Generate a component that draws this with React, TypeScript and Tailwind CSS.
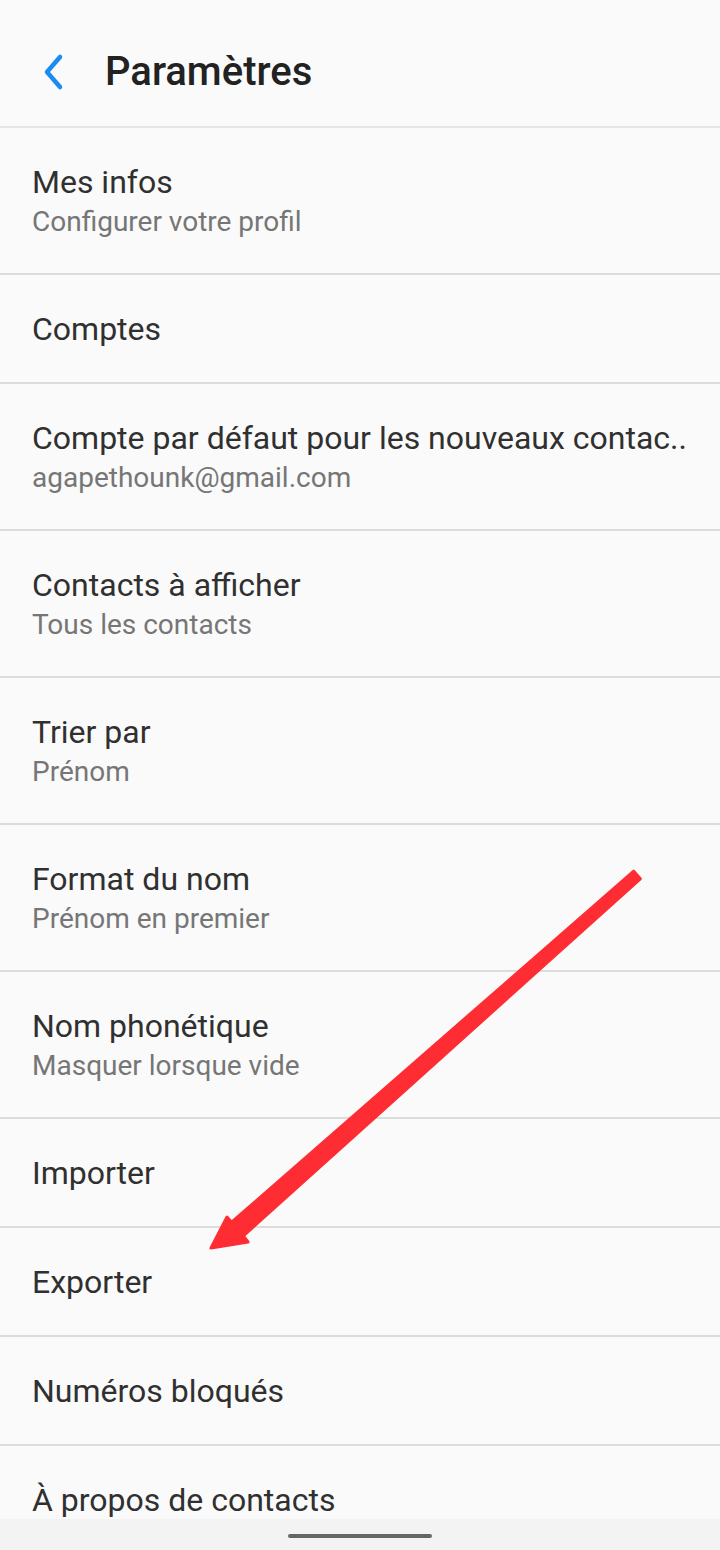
import React from "react";

type Row = { title: string; sub?: string };

const rows: Row[] = [
  { title: "Mes infos", sub: "Configurer votre profil" },
  { title: "Comptes" },
  { title: "Compte par défaut pour les nouveaux contac..", sub: "agapethounk@gmail.com" },
  { title: "Contacts à afficher", sub: "Tous les contacts" },
  { title: "Trier par", sub: "Prénom" },
  { title: "Format du nom", sub: "Prénom en premier" },
  { title: "Nom phonétique", sub: "Masquer lorsque vide" },
  { title: "Importer" },
  { title: "Exporter" },
  { title: "Numéros bloqués" },
  { title: "À propos de contacts" },
];

function SettingRow({ row }: { row: Row }) {
  return (
    <div
      className={`flex flex-col justify-center px-[32px] border-b-2 border-[#dcdcdc] ${
        row.sub ? "h-[147px]" : "h-[109px]"
      }`}
    >
      <div className="text-[32px] leading-[42px] text-[#303030] whitespace-nowrap">{row.title}</div>
      {row.sub && <div className="text-[28px] leading-[38px] text-[#767676]">{row.sub}</div>}
    </div>
  );
}

export default function App() {
  return (
    <div
      className="relative w-[720px] h-[1550px] bg-[#fafafa] flex flex-col overflow-hidden"
      style={{ fontFamily: "Roboto, 'Noto Sans', sans-serif" }}
    >
      {/* Header */}
      <div className="h-[128px] shrink-0 flex items-center pt-[18px] border-b-2 border-[#e6e6e6]">
        <svg width="28" height="40" viewBox="0 0 28 40" className="ml-[40px]">
          <path d="M20 5 L7 20 L20 35" fill="none" stroke="#1a8cf0" strokeWidth="4.5" strokeLinecap="round" strokeLinejoin="round" />
        </svg>
        <h1 className="ml-[37px] text-[40px] font-medium text-[#222222] leading-none">Paramètres</h1>
      </div>

      {/* List */}
      <div className="flex-1 overflow-hidden">
        {rows.map((row, i) => (
          <SettingRow key={i} row={row} />
        ))}
      </div>

      {/* Gesture bar */}
      <div className="h-[31px] shrink-0 bg-[#f3f3f3] flex items-center justify-center">
        <div className="w-[144px] h-[4px] rounded-full bg-[#666666] mt-[3px]" />
      </div>

      {/* Red annotation arrow */}
      <svg className="absolute inset-0 pointer-events-none" width="720" height="1550" viewBox="0 0 720 1550">
        <polygon
          points="211,1248 248,1242 243.4,1235.8 640.3,878.8 633.7,871.2 231.6,1222.2 227,1217"
          fill="#fe2c33"
          stroke="#fe2c33"
          strokeWidth="3"
          strokeLinejoin="round"
        />
      </svg>
    </div>
  );
}
